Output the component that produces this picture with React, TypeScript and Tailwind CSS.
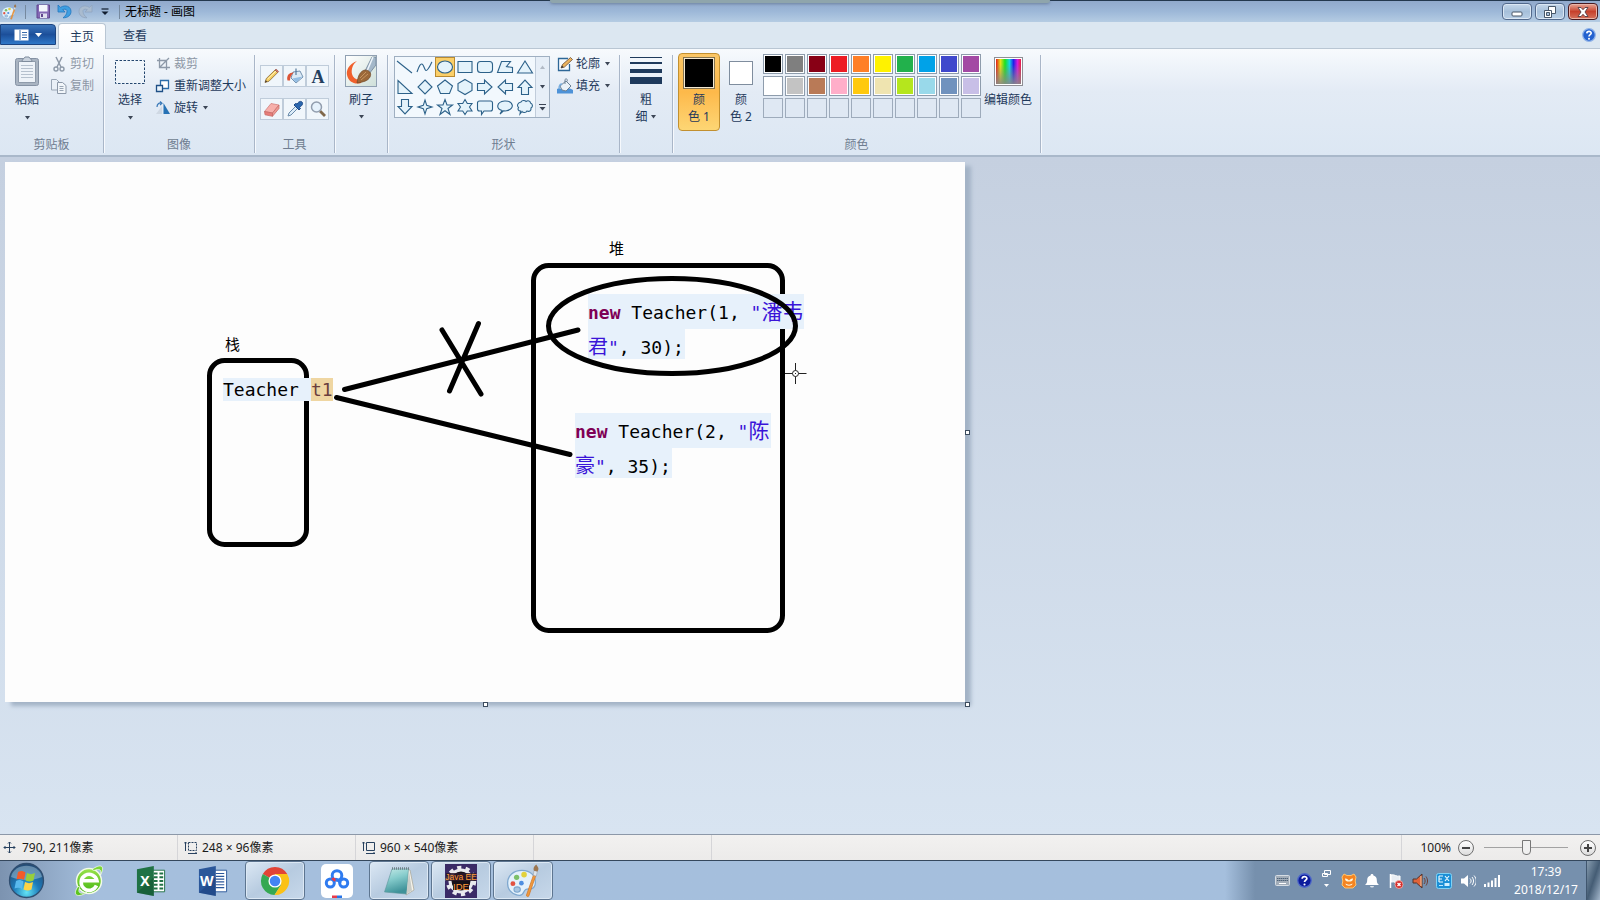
import type { ReactNode } from "react";

const ui = "font-['Noto_Sans','Noto_Sans_CJK_SC',sans-serif]";

function Caret({ className = "" }: { className?: string }) {
  return (
    <svg className={className} width="7" height="4" viewBox="0 0 7 4" aria-hidden="true">
      <path d="M1 0h5L3.500 3.500z" fill="#3c4656" />
    </svg>
  );
}

function Group({ label, className = "", children }: { label?: string; className?: string; children: ReactNode }) {
  return (
    <section className={`flex flex-col justify-between border-r border-[#a9b6c8] shadow-[1px_0_0_#f6f9fd] ${className}`}>
      <div className="flex items-start">{children}</div>
      <div className="text-center text-[#6f7d90] leading-4">{label}</div>
    </section>
  );
}

/* ---------- title bar ---------- */

function PaletteIcon({ size }: { size: number }) {
  return (
    <svg width={size} height={size} viewBox="0 0 32 32" aria-hidden="true">
      <path d="M15 6C7 6 1.500 11 1.500 18S7 29.500 13 29.500c4 0 3-4 5.500-5.500 3-1.500 8 1 9-5C28.500 11 23 6 15 6z" fill="#e4f1fb" stroke="#7fa8cf" strokeWidth="1.200" />
      <ellipse cx="10.500" cy="24" rx="3" ry="2.500" fill="#a8c6e2" stroke="#7fa8cf" />
      <circle cx="6.500" cy="18.500" r="2.300" fill="#e25342" />
      <circle cx="10" cy="12.500" r="2.500" fill="#7cc06a" />
      <circle cx="17" cy="10" r="2.600" fill="#e3d23d" />
      <circle cx="14.500" cy="18" r="2.200" fill="#4f8fe0" />
      <path d="M26 10l2 1-6.500 19c-.6 1.300-2.600.600-2.200-.800z" fill="#f09a3c" stroke="#d0762a" strokeWidth=".7" />
      <path d="M25.500 10.500l1-4.500 3 1-1 4.500z" fill="#dfe4ea" stroke="#8f9aa8" strokeWidth=".5" />
      <path d="M26.300 6.300C25 3 28 1 28.500.500c.500 1.500 3.500 3 1.200 6.500z" fill="#9c7650" />
    </svg>
  );
}

function TitleBar() {
  const quick = "flex h-5 w-[21px] items-center justify-center";
  return (
    <header className="relative flex h-[22px] items-center border-t border-[#24384e] bg-linear-to-b from-[#91a9cc] via-[#9db8d8] to-[#b5cce3]">
      <div className="absolute -top-px left-[34.400%] right-[34.400%] h-[3px] rounded-b-sm bg-[#8fa5ac] shadow-[0_1px_3px_#6d819f]" />
      <span className="ml-px flex w-[24px] items-center"><PaletteIcon size={16} /></span>
      <span className="h-[14px] w-px bg-[#75899f]" />
      <button aria-label="保存" className="ml-[6px] flex h-5 w-[22px] items-center justify-center">
        <svg width="15" height="15" viewBox="0 0 15 15">
          <path d="M1 1h12.500v13H1z" fill="#8368b4" stroke="#60458e" />
          <path d="M3 1h8.500v6.500H3z" fill="#f3f7fc" />
          <path d="M4 9.500h7V14H4z" fill="#dfe0ef" />
          <path d="M5 10h2v3H5z" fill="#60458e" />
        </svg>
      </button>
      <button aria-label="撤消" className={quick}>
        <svg width="15" height="15" viewBox="0 0 15 15">
          <path d="M1 1v7h7L5.700 5.600c3-1.200 4.600 0 4.300 2.200C9.700 10 8.500 12 6 13.800 11 14 14 11 14 7.500 14 2.500 8.500.200 3.500 3.400z" fill="#3f9fe2" stroke="#2376bd" strokeWidth=".8" />
        </svg>
      </button>
      <button aria-label="重做" className={quick}>
        <svg width="15" height="15" viewBox="0 0 15 15">
          <path d="M14 1v7H7l2.300-2.400c-3-1.200-4.600 0-4.300 2.200C5.300 10 6.500 12 9 13.800 4 14 1 11 1 7.500 1 2.500 6.500.200 11.500 3.400z" fill="#a9bbcf" stroke="#8fa5bf" strokeWidth=".8" />
        </svg>
      </button>
      <button aria-label="自定义快速访问工具栏" className="flex h-5 w-[18px] items-center justify-center">
        <svg width="8" height="8" viewBox="0 0 8 8"><path d="M.500 1h7" stroke="#111d2e" strokeWidth="1.200" /><path d="M.500 3.500h7L4 7z" fill="#111d2e" /></svg>
      </button>
      <span className="ml-[5px] h-[14px] w-px bg-[#75899f]" />
      <h1 className="ml-[5px] flex-1 leading-5 text-black">无标题 - 画图</h1>
      <div className="flex gap-[3px] pr-[2px]">
        <button aria-label="最小化" className="flex h-[17px] w-[30px] items-center justify-center rounded-sm border border-[#52698c] bg-linear-to-b from-[#c5d7ea] via-[#a6bfda] to-[#b9cfe6] shadow-[inset_0_0_0_1px_#dbe7f4]">
          <svg width="12" height="10" viewBox="0 0 12 10"><rect x="1" y="5" width="10" height="4" rx="1" fill="#fff" stroke="#485769" /></svg>
        </button>
        <button aria-label="还原" className="flex h-[17px] w-[30px] items-center justify-center rounded-sm border border-[#52698c] bg-linear-to-b from-[#c5d7ea] via-[#a6bfda] to-[#b9cfe6] shadow-[inset_0_0_0_1px_#dbe7f4]">
          <svg width="12" height="12" viewBox="0 0 12 12" fill="#fff" stroke="#485769"><path d="M4.500.500h7v7h-7z" /><path d="M.500 4.500h7v7h-7z" /><path d="M2.500 6.500h3v3h-3z" fill="#a6bfda" /></svg>
        </button>
        <button aria-label="关闭" className="flex h-[17px] w-[30px] items-center justify-center rounded-sm border border-[#4a1a20] bg-linear-to-b from-[#e6a596] via-[#c6402c] to-[#d4705b] shadow-[inset_0_0_0_1px_#eab5a8]">
          <svg width="12" height="10" viewBox="0 0 12 10"><path d="M1 .500h3L6 2.700 8 .500h3L8 5l3 4.500H8L6 7.300 4 9.500H1L4 5z" fill="#fff" stroke="#553b42" strokeWidth=".9" /></svg>
        </button>
      </div>
    </header>
  );
}

function HelpBall({ size, dark = false }: { size: number; dark?: boolean }) {
  return (
    <svg width={size} height={size} viewBox="0 0 14 14" aria-hidden="true">
      <circle cx="7" cy="7" r="6.300" fill={dark ? "#0c1c9c" : "#2361cf"} stroke={dark ? "#4c66c9" : "#8fb2e8"} strokeWidth="1.200" />
      <path d="M4.800 5.400C4.900 2.700 9.300 2.800 9.200 5.300 9.100 6.700 7 6.700 7 8.500" fill="none" stroke="#fff" strokeWidth="1.600" />
      <circle cx="7" cy="10.700" r="1" fill="#fff" />
    </svg>
  );
}

function Tabs() {
  return (
    <nav className="flex h-[27px] items-end border-b border-[#b9c6d3] bg-[#dce7f1]">
      <button aria-label="文件" className="mb-[3px] flex h-[21px] w-14 items-center justify-center gap-[6px] rounded-tr-sm border border-[#1c4480] bg-linear-to-b from-[#3c76bc] via-[#1c4f9a] to-[#2f78c8]">
        <svg width="15" height="12" viewBox="0 0 15 12"><rect x=".5" y=".5" width="14" height="11" fill="#fff" /><path d="M6 1v10" stroke="#3a6cab" /><path d="M8 3.500h5M8 6h5M8 8.500h5" stroke="#3a6cab" /></svg>
        <svg width="7" height="4" viewBox="0 0 7 4"><path d="M0 0h7L3.500 4z" fill="#fff" /></svg>
      </button>
      <button className="-mb-px ml-[2px] h-[26px] w-12 rounded-t-sm border border-b-0 border-[#b9c6d3] bg-linear-to-b from-white to-[#f7fafd] text-[#1e395b]">主页</button>
      <button className="h-[25px] w-[58px] text-[#1e395b]">查看</button>
      <span className="flex-1" />
      <button aria-label="帮助" className="mr-1 mb-[3px] flex h-5 w-[14px] items-center justify-center"><HelpBall size={14} /></button>
    </nav>
  );
}

/* ---------- ribbon ---------- */

const shapes: { name: string; d: string }[] = [
  { name: "直线", d: "M2 4l15 12" },
  { name: "曲线", d: "M2 15c2-6 4-10 6-7s2 8 5 4 3-6 4-7" },
  { name: "椭圆形", d: "M2.500 10a7.500 6 0 1 0 15 0a7.500 6 0 1 0-15 0z" },
  { name: "矩形", d: "M3 4.500h14v11H3z" },
  { name: "圆角矩形", d: "M5.500 4.500h9q3 0 3 3v5q0 3-3 3h-9q-3 0-3-3v-5q0-3 3-3z" },
  { name: "多边形", d: "M6.500 4.500h9l-4 5 6 1v5h-15z" },
  { name: "三角形", d: "M10 4l7.500 12h-15z" },
  { name: "直角三角形", d: "M3 3.500v13h14z" },
  { name: "菱形", d: "M10 3l7 7-7 7-7-7z" },
  { name: "五边形", d: "M10 3l7.500 6-3 7.500h-9L2.500 9z" },
  { name: "六边形", d: "M10 2.500l7 4v7l-7 4-7-4v-7z" },
  { name: "右箭头", d: "M2.500 6.500h7V3l7.500 7-7.500 7v-3.500h-7z" },
  { name: "左箭头", d: "M17.500 6.500h-7V3L3 10l7.500 7v-3.500h7z" },
  { name: "向上箭头", d: "M6.500 17.500v-7H3L10 3l7 7.500h-3.500v7z" },
  { name: "向下箭头", d: "M6.500 2.500v7H3l7 7.500 7-7.500h-3.500v-7z" },
  { name: "四角星形", d: "M10 3l1.700 5.300L17 10l-5.300 1.700L10 17l-1.700-5.300L3 10l5.300-1.700z" },
  { name: "五角星形", d: "M10 2.500l2 5.500h5.500L13 11.500l2 6-5-3.700-5 3.700 2-6L2.500 8H8z" },
  { name: "六角星形", d: "M10 2.500l2.300 4h4.700L14.500 10l2.500 4h-4.700L10 17.500 7.700 14H3l2.500-4L3 6.500h4.700z" },
  { name: "圆角矩形标注", d: "M4.500 4h11q2 0 2 2v6q0 2-2 2H9l-2.500 3.500V14h-2q-2 0-2-2V6q0-2 2-2z" },
  { name: "椭圆形标注", d: "M7 13.500C1 12 1 5 9.500 4c9-.500 11 8 2 9.800-1.500.300-2 .100-3 0L5 17z" },
  { name: "云形标注", d: "M6 5c1-2 4-2 5-.500 2-1.500 4.500-.500 4.500 1.500 2.500 1 2.500 4 .500 5 .500 3-2 4-4 3-1 2-4 2-5 .500L5 17l.500-3C3 14 2.500 12 3.500 10.500 1.500 9 2.500 5.500 6 5z" },
];

const tools: { name: string; icon: ReactNode }[] = [
  { name: "铅笔", icon: <><path d="M2 15.500l1.300-4L12 3l2.700 2.500-8.700 8.700z" fill="#f6cf63" stroke="#86683a" strokeWidth=".8" /><path d="M4.700 12L13 4" stroke="#fff3bd" /><path d="M12 3l1-1 2.700 2.500-1 1z" fill="#d9776b" stroke="#8d5148" strokeWidth=".6" /><path d="M2 15.500l.800-2.300 1.400 1.400z" fill="#3b332c" /></> },
  { name: "用颜色填充", icon: <><path d="M7 5l7-1 3 6-7 6-5-5z" fill="#dceaf5" stroke="#55799c" strokeWidth=".8" /><path d="M10 8V1.500" stroke="#55799c" strokeWidth="1.200" /><path d="M1.500 13.500C0 8 4 5 8 5.500 5 8 4 10 4 13.500z" fill="#dc5436" /><path d="M6.500 11.500L16.500 9.500l-6.500 6z" fill="#92bde4" /></> },
  { name: "文本", icon: <text x="9" y="15.500" textAnchor="middle" fontFamily="Liberation Serif, serif" fontWeight="bold" fontSize="18" fill="#24405f">A</text> },
  { name: "橡皮擦", icon: <><path d="M1.500 11.500l6.500-8 8 1.500-6.500 8z" fill="#f7b0ab" stroke="#cf7672" strokeWidth=".7" /><path d="M1.500 11.500l8 1.500v3.300l-7.500-1.500z" fill="#e87e79" stroke="#c46763" strokeWidth=".7" /><path d="M9.500 13L16 5v3.500l-6.500 7.800z" fill="#ee9a94" stroke="#c46763" strokeWidth=".7" /></> },
  { name: "颜色选取器", icon: <><path d="M2 16l1-3 7-7 2 2-7 7z" fill="#dcecf8" stroke="#6b8cab" /><path d="M8 5l5 5 1.500-1.500-1-1C17 5 17 3 16 2s-3-1-5 2l-1.500-.500z" fill="#2b67ae" stroke="#1b4785" /></> },
  { name: "放大镜", icon: <><path d="M11 11l5 5" stroke="#80684a" strokeWidth="2.800" /><circle cx="7.500" cy="7" r="5" fill="#e6f2fc" stroke="#929eae" strokeWidth="1.500" /></> },
];

const colours: { name: string; cls: string }[] = [
  { name: "黑色", cls: "bg-[#000000]" }, { name: "灰色-50%", cls: "bg-[#7f7f7f]" }, { name: "深红色", cls: "bg-[#880015]" }, { name: "红色", cls: "bg-[#ed1c24]" }, { name: "橙色", cls: "bg-[#ff7f27]" },
  { name: "黄色", cls: "bg-[#fff200]" }, { name: "绿色", cls: "bg-[#22b14c]" }, { name: "青绿", cls: "bg-[#00a2e8]" }, { name: "靛蓝", cls: "bg-[#3f48cc]" }, { name: "紫色", cls: "bg-[#a349a4]" },
  { name: "白色", cls: "bg-[#ffffff]" }, { name: "灰色-25%", cls: "bg-[#c3c3c3]" }, { name: "褐色", cls: "bg-[#b97a57]" }, { name: "玫瑰色", cls: "bg-[#ffaec9]" }, { name: "金色", cls: "bg-[#ffc90e]" },
  { name: "浅黄色", cls: "bg-[#efe4b0]" }, { name: "酸橙色", cls: "bg-[#b5e61d]" }, { name: "淡青绿色", cls: "bg-[#99d9ea]" }, { name: "蓝灰色", cls: "bg-[#7092be]" }, { name: "淡紫色", cls: "bg-[#c8bfe7]" },
];

function Row({ icon, label, muted = false, caret = false }: { icon: ReactNode; label: string; muted?: boolean; caret?: boolean }) {
  return (
    <button disabled={muted} className={`flex h-[22px] items-center gap-[3px] whitespace-nowrap ${muted ? "text-[#8d97a5]" : "text-[#1e395b]"}`}>
      <svg width="16" height="16" viewBox="0 0 16 16" fill="none" aria-hidden="true">{icon}</svg>
      <span>{label}</span>
      {caret && <Caret className="ml-px" />}
    </button>
  );
}

function Ribbon() {
  return (
    <div className="flex h-[108px] border-b-2 border-[#a9b8ca] bg-linear-to-b from-[#f7fafd] via-[#e3ebf5] via-40% to-[#dce7f3] pt-[6px] pb-[2px] text-[#1e395b]">
      <Group label="剪贴板" className="w-[104px]">
        <button className="ml-[13px] flex w-[28px] flex-col items-center">
          <svg width="26" height="32" viewBox="0 0 26 32">
            <rect x="1.500" y="3.500" width="23" height="27" rx="2" fill="#a9b4c2" stroke="#8592a4" />
            <path d="M4.500 6.500h17v21h-17z" fill="#eef3f9" stroke="#8f9bab" />
            <path d="M7 10.500h12M7 13.500h12M7 16.500h12M7 19.500h12M7 22.500h12" stroke="#b6c1ce" />
            <path d="M8 6.500c0-3 2-2 3-4.500h4c1 2.500 3 1.500 3 4.500z" fill="#c9d2dd" stroke="#7f8c9d" />
          </svg>
          <span className="mt-[5px] leading-4">粘贴</span>
          <Caret className="mt-[8px]" />
        </button>
        <div className="ml-[10px] -mt-[2px] flex flex-col">
          <Row muted label="剪切" icon={<><path d="M5 1l5 10M11 1L6 11" stroke="#8d99a8" strokeWidth="1.500" /><circle cx="5" cy="13" r="2" stroke="#8d99a8" strokeWidth="1.400" /><circle cx="11" cy="13" r="2" stroke="#8d99a8" strokeWidth="1.400" /></>} />
          <Row muted label="复制" icon={<><path d="M.500 1.500h5l2.500 2.500v8H.500z" fill="#eaf0f7" stroke="#9aa6b5" /><path d="M6.500 4.500h5l3.500 3v8H6.500z" fill="#f2f6fa" stroke="#8c98a8" /><path d="M8.500 8.500h4M8.500 10.500h4M8.500 12.500h4" stroke="#9aa6b5" /></>} />
        </div>
      </Group>

      <Group label="图像" className="w-[151px]">
        <button className="ml-[10px] flex w-8 flex-col items-center">
          <svg width="32" height="32" viewBox="0 0 32 32"><rect x="1.500" y="5.500" width="29" height="23" fill="#f2f7fc" fillOpacity=".5" stroke="#24466e" strokeDasharray="2.500 1.500" /></svg>
          <span className="mt-[5px] leading-4">选择</span>
          <Caret className="mt-[8px]" />
        </button>
        <div className="ml-[9px] -mt-[2px] flex flex-col">
          <Row muted label="裁剪" icon={<><path d="M4.500 2v9.500H15M2 4.500h9.500V14M4.500 11.500L14 2" stroke="#8d99a8" strokeWidth="1.300" /></>} />
          <Row label="重新调整大小" icon={<><path d="M5.500 2.500h8v8h-8z" fill="#fff" stroke="#2b6ca8" strokeWidth="1.300" /><path d="M1.500 7.500h6v6h-6z" fill="#eaf4fc" stroke="#1e4f86" strokeWidth="1.300" /></>} />
          <Row caret label="旋转" icon={<><path d="M7 6v8H1z" fill="#cfd8e3" /><path d="M8.500 3v11H15z" fill="#2772b5" /><path d="M2 7c0-3 2-4.500 4.500-4M5 1.500l2 1.700L5 5" stroke="#3a79b8" strokeWidth="1.200" /></>} />
        </div>
      </Group>

      <Group label="工具" className="w-20">
        <div className="mt-[10px] ml-[5px] grid grid-cols-3 gap-y-[11px]">
          {tools.map((t) => (
            <button key={t.name} aria-label={t.name} className="flex h-[22px] w-[23px] items-center justify-center border border-[#bfccda] bg-[#f0f6fb]">
              <svg width="18" height="18" viewBox="0 0 18 18">{t.icon}</svg>
            </button>
          ))}
        </div>
      </Group>

      <Group className="w-[53px]">
        <button className="ml-[10px] flex w-8 flex-col items-center">
          <span className="border border-[#90a0b2] bg-linear-to-br from-white to-[#cfe0da]">
            <svg width="30" height="30" viewBox="0 0 30 30">
              <path d="M11 5C3 8 0 14 1 19c1.500 7 8 10 14 8l1-4c-5 1.500-9-.500-10-5C5 13 7 8 11 5z" fill="#f0602c" />
              <path d="M19 15L26 1l4 0v8l-7 9z" fill="#a4b8ca" stroke="#64798d" strokeWidth=".7" />
              <path d="M27 1l-6 14" stroke="#eef5fb" strokeWidth="1.500" />
              <path d="M11 27c1-7 3-12 8-13 4 0 7 3 5 7-2 4-7 5-13 6z" fill="#9b6839" stroke="#6e4625" strokeWidth=".7" />
              <path d="M14 22l6-6M15 24l7-6" stroke="#c79560" />
            </svg>
          </span>
          <span className="mt-[5px] leading-4">刷子</span>
          <Caret className="mt-[7px]" />
        </button>
      </Group>

      <Group label="形状" className="w-[232px]">
        <div className="mt-px ml-[6px] flex border border-[#9fafc1] bg-[#f2f8fd]">
          <div className="grid grid-cols-7">
            {shapes.map((s, i) => (
              <button key={s.name} aria-label={s.name} className={`flex size-5 items-center justify-center ${i === 2 ? "border border-[#b88a31] bg-[#fbcf68]" : ""}`}>
                <svg className="shrink-0" width="20" height="20" viewBox="0 0 20 20">
                  <path d={s.d} fill={i < 2 ? "none" : "#e4f3fb"} stroke="#2c6189" strokeWidth="1.100" />
                </svg>
              </button>
            ))}
          </div>
          <div className="flex w-[14px] flex-col border-l border-[#c0ccda] bg-[#e6eef7]">
            <button aria-label="上一行" className="flex flex-1 items-center justify-center"><Caret className="rotate-180 opacity-30" /></button>
            <button aria-label="下一行" className="flex flex-1 items-center justify-center"><Caret /></button>
            <button aria-label="更多形状" className="flex flex-1 items-center justify-center">
              <svg width="7" height="7" viewBox="0 0 7 7"><path d="M0 .500h7" stroke="#3c4656" /><path d="M.500 3h6L3.500 6.500z" fill="#3c4656" /></svg>
            </button>
          </div>
        </div>
        <div className="ml-[7px] -mt-[2px] flex flex-col">
          <Row caret label="轮廓" icon={<><path d="M11 2.500H1.500v12h11V8" fill="#f7fbfe" stroke="#2e6797" strokeWidth="1.300" /><path d="M4 12l1.500-3.500 8-7 2 2-8 7.500z" fill="#edb35c" stroke="#6b4f37" strokeWidth=".8" /><path d="M4 12l1-2.500 1.700 1.700z" fill="#333" /></>} />
          <Row caret label="填充" icon={<><path d="M0 15.500V11c3-2 4 1 7 0s6-1 9 1v3.500z" fill="#4d92d8" /><path d="M3 8l6-5 5 5-5 5-4-1z" fill="#eaf2f8" stroke="#6b8194" /><path d="M8 6V1.500c1.500-1.500 3 0 2 2" stroke="#6b8194" /><path d="M2 11c0-3 1-5 3-5" stroke="#7aaede" strokeWidth="1.500" /></>} />
        </div>
      </Group>

      <Group className="w-[53px]">
        <button className="ml-[10px] flex w-8 flex-col items-center">
          <svg width="32" height="32" viewBox="0 0 32 32" fill="#1f3a5c"><path d="M0 2h32v1H0zM0 7h32v2H0zM0 14h32v4H0zM0 22h32v7H0z" /></svg>
          <span className="mt-[5px] leading-4">粗</span>
          <span className="mt-px flex items-center gap-[2px] leading-4">细 <Caret /></span>
        </button>
      </Group>

      <Group label="颜色" className="w-[368px]">
        <button className="-mt-[2px] ml-[5px] flex h-[78px] w-[42px] flex-col items-center rounded-sm border border-[#c29030] bg-linear-to-b from-[#fbc665] via-[#fdb94a] to-[#fdd674] pt-[3px]">
          <span className="block size-8 border border-[#84734f] bg-black outline-1 -outline-offset-2 outline-[#f4e9d2]" />
          <span className="mt-[3px] leading-4">颜</span>
          <span className="mt-px leading-4">色 1</span>
        </button>
        <button className="-mt-[2px] flex h-[78px] w-[42px] flex-col items-center pt-2">
          <span className="block size-6 border border-[#7f8d9e] bg-white" />
          <span className="mt-[7px] leading-4">颜</span>
          <span className="mt-px leading-4">色 2</span>
        </button>
        <div className="-mt-px ml-px grid grid-cols-10 gap-[2px]">
          {colours.map((c) => (
            <button key={c.name} aria-label={c.name} className="size-5 border border-[#8e9cac] bg-white p-px"><span className={`block size-4 ${c.cls}`} /></button>
          ))}
          {Array.from({ length: 10 }, (_, i) => (
            <button key={i} disabled aria-label="自定义颜色" className="size-5 border border-[#9eabbb] bg-[#dfe8f3]" />
          ))}
        </div>
        <button className="ml-[3px] flex flex-col items-center pt-[2px] whitespace-nowrap">
          <span className="border border-[#8e8e94] bg-white p-px">
            <svg width="25" height="25" viewBox="0 0 25 25">
              <defs>
                <linearGradient id="hue"><stop offset="0" stopColor="#e21b1b" /><stop offset=".18" stopColor="#e8e017" /><stop offset=".36" stopColor="#1ee01e" /><stop offset=".54" stopColor="#13d5e5" /><stop offset=".7" stopColor="#2020e8" /><stop offset=".86" stopColor="#d81bd8" /><stop offset="1" stopColor="#e81f3d" /></linearGradient>
                <linearGradient id="grey" x1="0" y1="0" x2="0" y2="1"><stop offset=".2" stopColor="#888" stopOpacity="0" /><stop offset="1" stopColor="#888" stopOpacity=".9" /></linearGradient>
              </defs>
              <path d="M0 0h25v25H0z" fill="url(#hue)" /><path d="M0 0h25v25H0z" fill="url(#grey)" />
            </svg>
          </span>
          <span className="mt-[6px] leading-4">编辑颜色</span>
        </button>
      </Group>
    </div>
  );
}

/* ---------- canvas ---------- */

function CodeText({ index, first, second, age, className }: { index: number; first: string; second: string; age: number; className: string }) {
  return (
    <div className={`absolute whitespace-pre ${className}`}>
      <div className="h-[35px] bg-[#e7f1fb] leading-[37px]">
        <b className="text-[#7f0055]">new</b> Teacher({index}, <span className="text-[#3a14d8]">"<span className="text-[21px]">{first}</span></span>
      </div>
      <div className="h-[30px] w-[97px] bg-[#e7f1fb] leading-9">
        <span className="text-[#3a14d8]"><span className="text-[20px]">{second}</span>"</span>, {age});
      </div>
    </div>
  );
}

function Canvas() {
  const handle = "absolute size-[5px] border border-[#3c4c5e] bg-white";
  return (
    <main className="flex-1 bg-linear-to-b from-[#c5d0e0] to-[#d8e4f1] pt-[5px] pb-[132px] pl-[5px]">
      <div className="relative h-[540px] w-[960px] bg-[#fdfdfd] font-['DejaVu_Sans_Mono','Noto_Sans_CJK_SC',monospace] text-[18px] text-black shadow-[6px_4px_4px_#a3b3c6]">
        <svg className="absolute inset-0" width="960" height="540" viewBox="0 0 960 540" fill="none" stroke="#000" strokeWidth="5">
          <rect x="204.500" y="198.500" width="97" height="184" rx="15" />
          <rect x="528.500" y="103.500" width="249" height="365" rx="15" />
        </svg>
        <span className="absolute top-[172px] left-[220px] text-[15px] leading-[22px]">栈</span>
        <span className="absolute top-[76px] left-[604px] text-[15px] leading-[22px]">堆</span>
        <div className="absolute top-[216px] left-[218px] flex h-[23px] leading-[23px]">
          <span className="w-[88px] bg-[#e7f1fb]">Teacher</span>
          <span className="bg-[#efd6a2] text-[#6a3e3e]">t1</span>
        </div>
        <CodeText index={1} first="潘韦" second="君" age={30} className="top-[132px] left-[583px] w-[216px]" />
        <CodeText index={2} first="陈" second="豪" age={35} className="top-[251px] left-[570px] w-[196px]" />
        <svg className="absolute inset-0" width="960" height="540" viewBox="0 0 960 540" fill="none" stroke="#000" strokeWidth="5" strokeLinecap="round">
          <ellipse cx="667" cy="164" rx="123.500" ry="47.500" />
          <path d="M339.500 227.500L573 168M331.500 235.500L565 292.500M437 168l39 64M473.500 161.500L444.500 229" />
          <g stroke="#222" strokeWidth="1" strokeLinecap="butt">
            <circle cx="790.500" cy="211.500" r="3" fill="#fff" />
            <path d="M780 211.500h7.500M793.500 211.500h8M790.500 201v7.500M790.500 214.500v7.500M790 211.500h1" />
          </g>
        </svg>
        <span className={`${handle} top-[268px] -right-[5px]`} />
        <span className={`${handle} -right-[5px] -bottom-[5px]`} />
        <span className={`${handle} -bottom-[5px] left-[478px]`} />
      </div>
    </main>
  );
}

/* ---------- status bar ---------- */

function StatusBar() {
  const cell = "flex w-[178px] items-center gap-[5px] border-r border-[#d5d5d8] pl-[6px]";
  return (
    <footer className="flex h-[26px] border-t border-[#8c98a8] bg-linear-to-b from-[#f2f1f0] to-[#ecebea] text-[#1b1b1b]">
      <div className="flex w-[178px] items-center gap-[6px] border-r border-[#d5d5d8] pl-[3px]">
        <svg width="13" height="13" viewBox="0 0 13 13" stroke="#27415f" fill="none"><path d="M6.500 1v11M1 6.500h11M5 2.500l1.500-1.500L8 2.500M5 10.500L6.500 12 8 10.500M2.500 5L1 6.500 2.500 8M10.500 5L12 6.500 10.500 8" /></svg>
        790, 211像素
      </div>
      <div className={cell}>
        <svg width="13" height="13" viewBox="0 0 13 13" stroke="#27415f" fill="none"><path d="M1.500 1v9M0 2.500L1.500 1 3 2.500M4 12.500h9M11.500 11l1.500 1.500" /><path d="M4.500 1.500h8v8h-8z" strokeDasharray="2 1" /></svg>
        248 × 96像素
      </div>
      <div className={cell}>
        <svg width="13" height="13" viewBox="0 0 13 13" stroke="#27415f" fill="none"><path d="M1.500 1v9M0 2.500L1.500 1 3 2.500M4 12.500h9M11.500 11l1.500 1.500" /><path d="M4.500 1.500h8v8h-8z" /></svg>
        960 × 540像素
      </div>
      <div className={cell} />
      <div className="flex-1 border-r border-[#d5d5d8]" />
      <div className="flex w-[198px] items-center justify-end pr-1">
        <label htmlFor="zoom" className="mr-[7px]">100%</label>
        <button aria-label="缩小" className="flex size-4 items-center justify-center rounded-full border border-[#6f6f6f] bg-linear-to-b from-white to-[#dcdcdc]"><span className="h-[2px] w-2 bg-[#444]" /></button>
        <input id="zoom" type="range" min="0" max="100" defaultValue="50" className="mr-[12px] ml-[10px] h-[17px] w-[84px] appearance-none bg-transparent [background-image:linear-gradient(#a2a2a2,#a2a2a2)] bg-[length:100%_1px] bg-center bg-no-repeat [&::-webkit-slider-thumb]:h-[15px] [&::-webkit-slider-thumb]:w-[9px] [&::-webkit-slider-thumb]:appearance-none [&::-webkit-slider-thumb]:rounded-b-[4px] [&::-webkit-slider-thumb]:border [&::-webkit-slider-thumb]:border-[#777] [&::-webkit-slider-thumb]:bg-[#f0f0f0]" />
        <button aria-label="放大" className="flex size-4 items-center justify-center rounded-full border border-[#6f6f6f] bg-linear-to-b from-white to-[#dcdcdc]">
          <svg width="8" height="8" viewBox="0 0 8 8"><path d="M4 0v8M0 4h8" stroke="#444" strokeWidth="2" /></svg>
        </button>
      </div>
    </footer>
  );
}

/* ---------- taskbar ---------- */

function Office({ letter, fill, dark, grid }: { letter: string; fill: string; dark: string; grid: boolean }) {
  return (
    <svg width="30" height="32" viewBox="0 0 32 32">
      <path d="M17 4.500h13.500v23H17z" fill="#fff" stroke={fill} />
      {grid ? (
        <path d="M19 8h4M25 8h4M19 12h4M25 12h4M19 16h4M25 16h4M19 20h4M25 20h4M19 24h4M25 24h4" stroke={fill} strokeWidth="2" />
      ) : (
        <path d="M19 8h9M19 11h9M19 14h9M19 17h9M19 20h9M19 23h9" stroke={fill} strokeWidth="1.300" />
      )}
      <path d="M1 3.500L19 0v32L1 28.500z" fill={fill} /><path d="M1 28.500L19 12v20z" fill={dark} opacity=".35" />
      <text x="9.500" y="21.500" textAnchor="middle" fontFamily="Open Sans, sans-serif" fontWeight="bold" fontSize="15" fill="#fff">{letter}</text>
    </svg>
  );
}

const apps: { name: string; open: boolean; icon: ReactNode }[] = [
  { name: "浏览器", open: false, icon: (
    <svg width="32" height="32" viewBox="0 0 32 32">
      <defs><linearGradient id="leaf" x1="0" y1="0" x2="0" y2="1"><stop offset="0" stopColor="#9ae34c" /><stop offset="1" stopColor="#45b512" /></linearGradient></defs>
      <circle cx="16" cy="16" r="12.500" fill="url(#leaf)" stroke="#f2fbe8" strokeWidth="1.500" />
      <path d="M23.500 20.500A8 8 0 1 1 24 15.800H9.500" fill="none" stroke="#fff" strokeWidth="3.600" />
      <path d="M5 21.500C-1 30 4 33.500 14 27.500 6 29.500 4.500 27 7 22z" fill="#5cc41e" stroke="#f2fbe8" strokeWidth=".8" />
      <path d="M19 4.500C27-1.500 33 0 27.500 10 29 4 26 3.500 21 5.500z" fill="#7cd634" stroke="#f2fbe8" strokeWidth=".8" />
    </svg>
  ) },
  { name: "Excel", open: false, icon: <Office letter="X" fill="#207245" dark="#0a4023" grid /> },
  { name: "Word", open: false, icon: <Office letter="W" fill="#2b579a" dark="#12336c" grid={false} /> },
  { name: "Chrome", open: true, icon: (
    <svg width="30" height="32" viewBox="0 0 32 32">
      <path d="M16 16L3 8.500A15 15 0 0 1 29 8.500H16z" fill="#e14335" />
      <path d="M16 16L3 8.500A15 15 0 0 0 15.500 31l7-11z" fill="#35a852" />
      <path d="M16 16l6.500 4L15.500 31A15 15 0 0 0 29 8.500H16z" fill="#fbc116" />
      <circle cx="16" cy="16" r="7" fill="#fff" /><circle cx="16" cy="16" r="5.600" fill="#4384f4" />
    </svg>
  ) },
  { name: "百度网盘", open: false, icon: (
    <svg width="32" height="34" viewBox="0 0 32 34">
      <rect width="32" height="34" rx="5" fill="#fff" />
      <g fill="none" stroke="#2f7bf0" strokeWidth="3">
        <circle cx="16" cy="11.500" r="4.800" />
        <circle cx="9.300" cy="19" r="4" />
        <circle cx="22.700" cy="19" r="4" />
        <path d="M12.500 16.500c2.500-2.500 4.500-1 7 2.500" />
      </g>
      <path d="M11.500 14a5 5 0 0 0 3 2.200" fill="none" stroke="#e83a49" strokeWidth="3" />
      <path d="M11 31.500h5V34h-5z" fill="#e83a49" /><path d="M16 31.500h5V34h-5z" fill="#2875e8" />
    </svg>
  ) },
  { name: "记事本", open: true, icon: (
    <svg width="32" height="32" viewBox="0 0 32 32">
      <defs><linearGradient id="note" x1="0" y1="0" x2=".3" y2="1"><stop offset="0" stopColor="#c3e9e6" /><stop offset=".45" stopColor="#86cccc" /><stop offset="1" stopColor="#3f9299" /></linearGradient></defs>
      <path d="M24 4l3 1 4 20-8 5z" fill="#f5f3ea" stroke="#a7a394" strokeWidth=".7" />
      <path d="M9 4h16.500L23.500 29 1.500 27z" fill="url(#note)" stroke="#5d959b" strokeWidth=".6" />
      <path d="M23.500 29L29 25.500 26 6z" fill="#c9cdc8" />
      <path d="M9 3.500h17" stroke="#6f8087" strokeWidth="2.400" strokeDasharray="1 1" />
    </svg>
  ) },
  { name: "Java EE IDE", open: true, icon: (
    <svg width="32" height="34" viewBox="0 0 32 34">
      <path d="M0 0h32v34H0z" fill="#3a2a66" />
      <circle cx="16" cy="17" r="13.500" fill="none" stroke="#e9eaee" strokeWidth="3.500" strokeDasharray="4.200 4.280" />
      <circle cx="16" cy="17" r="11" fill="#161019" stroke="#e9eaee" strokeWidth="3" />
      <path d="M1 9h30v8H1z" fill="#2a1829" opacity=".85" /><path d="M8 17.500h16V26H8z" fill="#161019" />
      <text x="16" y="16" textAnchor="middle" fontFamily="Liberation Sans, sans-serif" fontSize="8.500" fill="#ff9a3a">Java EE</text>
      <text x="16" y="25.500" textAnchor="middle" fontFamily="Liberation Sans, sans-serif" fontSize="9.500" fill="#ff9a3a">IDE</text>
    </svg>
  ) },
  { name: "画图", open: true, icon: <PaletteIcon size={34} /> },
];

const tray: { name: string; icon: ReactNode }[] = [
  { name: "通知", icon: <><path d="M8 1c.9 0 1.400.600 1.400 1.400C12 3 12.800 5 12.800 7c0 2.500.700 3.500 2.200 5H1c1.500-1.500 2.200-2.500 2.200-5 0-2 .8-4 3.400-4.600C6.600 1.600 7.100 1 8 1z" fill="#fff" /><path d="M6 13.200h4c-.3 1.600-3.700 1.600-4 0z" fill="#fff" /></> },
  { name: "操作中心", icon: <><path d="M2.500 1v14" stroke="#fff" strokeWidth="1.500" /><path d="M3 2c4-1 5 2 9 1v7c-4 1-5-2-9-1z" fill="#e9eef4" stroke="#fff" /><circle cx="11" cy="11.500" r="4" fill="#d32b2b" stroke="#f4b2aa" strokeWidth=".8" /><path d="M9.500 10l3 3M12.500 10l-3 3" stroke="#fff" strokeWidth="1.300" /></> },
  { name: "音频管理器", icon: <><path d="M1 6h3.500L10 1v14l-5.500-5H1z" fill="#e0643a" stroke="#53342d" /><path d="M9 3v10" stroke="#f8c9a2" /><path d="M12 5c1.500 2 1.500 4 0 6M14 3.500c2 3 2 6 0 9" stroke="#6d3c31" /></> },
  { name: "显卡控制", icon: <><rect x=".5" y=".5" width="15" height="15" rx="2" fill="#1b8fd6" stroke="#7fd2f5" /><path d="M3 3h4M3 3v6M3 6h3M3 9h4M9 3l4 5M13 3L9 8" stroke="#e8f8ff" strokeWidth="1.200" /><path d="M8.500 10h5v3h-5z" fill="#cfefff" /><path d="M3 12.500h4" stroke="#bfe9ff" /></> },
  { name: "音量", icon: <><path d="M1 5.500h3L8 2v12l-4-3.500H1z" fill="#fff" /><path d="M10 5.500c1.500 1.500 1.500 3.500 0 5M12 4c2 2.500 2 5.500 0 8M14 2.500c3 3.500 3 7.500 0 11" stroke="#fff" /></> },
  { name: "网络", icon: <path d="M0 11h2v3H0zM3.500 9.500h2V14h-2zM7 7.500h2V14H7zM10.500 5h2v9h-2zM14 2h2v12h-2z" fill="#fff" /> },
];

function Taskbar() {
  return (
    <nav className="flex h-10 items-center border-t border-[#35485d] bg-linear-to-r from-[#7c93b0] via-[#a5bfdd] via-6% to-[#a5bfdd]">
      <button aria-label="开始" className="flex h-full w-[59px] items-center pl-2">
        <svg width="37" height="37" viewBox="0 0 37 37">
          <defs><radialGradient id="orb" cx=".5" cy=".85" r=".85"><stop offset="0" stopColor="#62e3f5" /><stop offset=".45" stopColor="#1d7ab9" /><stop offset="1" stopColor="#244870" /></radialGradient></defs>
          <circle cx="18.500" cy="18.500" r="17" fill="url(#orb)" stroke="#304e70" strokeWidth="1.300" />
          <path d="M3 15C6 0 31 0 34 15c-9 4-22 4-31 0z" fill="#c8e1ee" opacity=".4" />
          <path d="M10 10c3-1.500 5-1 7.500.500L16 18c-2.500-1.500-4.500-1.500-7.500-.500z" fill="#f35a29" />
          <path d="M19 11c3 1.500 5 1.500 8 0L25.500 18.500c-3 1.500-5 1-8 0z" fill="#97cf3c" />
          <path d="M8 19c3-1.500 5-1 7.500.500L14 27c-2.500-1.500-4.500-1.500-7.500-.500z" fill="#59b9ed" />
          <path d="M17 20c3 1.500 5 1.500 8 0L23.500 27.500c-3 1.500-5 1-8 0z" fill="#fed344" />
        </svg>
      </button>
      <div className="flex h-full gap-[2px]">
        {apps.map((a) => (
          <button key={a.name} aria-label={a.name} className={`flex w-[60px] items-center justify-center rounded-sm border ${a.open ? "border-[#5d7590] bg-linear-to-br from-[#dce8f4] via-[#b7cbe0] to-[#c7d8ea] shadow-[inset_0_0_0_1px_#dce8f4]" : "border-transparent"}`}>{a.icon}</button>
        ))}
      </div>
      <span className="flex-1" />
      <div className="flex h-full items-center bg-linear-to-r from-transparent to-[#7690ad] to-8% pl-[45px] text-white">
        <button aria-label="键盘" className="flex w-6 justify-center">
          <svg width="15" height="11" viewBox="0 0 15 11" fill="none"><rect x=".5" y=".5" width="14" height="10" rx="1" fill="#a2adb9" stroke="#d6dde4" /><path d="M2 3.500h11M2 5.500h11" stroke="#4f6379" strokeDasharray="1.500 .5" /><path d="M4 8.500h7" stroke="#fff" /></svg>
        </button>
        <button aria-label="输入法帮助" className="flex w-5 justify-center"><HelpBall size={15} dark /></button>
        <button aria-label="语言栏选项" className="flex w-6 justify-center pb-1">
          <svg width="9" height="18" viewBox="0 0 9 18" fill="none"><path d="M2.500.500h6v4h-6zM.500 3.500h5v3h-5z" stroke="#fff" fill="#7690ad" /><path d="M2 14h5l-2.500 3z" fill="#fff" /></svg>
        </button>
        <button aria-label="安全软件" className="flex w-[22px] justify-center">
          <svg width="16" height="16" viewBox="0 0 16 16"><path d="M3 1l3 1.500h4L13 1l2 3-.800 4L15 12l-3 3H4l-3-3 .800-4L1 4z" fill="#f58420" stroke="#ffc56f" /><path d="M4 5.500c1.500 0 2.500.500 4 2 1.500-1.500 2.500-2 4-2 0 2.500-1.500 3-4 3s-4-.500-4-3zM4.500 10.500c2 1.500 5 1.500 7 0 0 3-7 3-7 0z" fill="#fff6dc" /></svg>
        </button>
        {tray.map((t) => (
          <button key={t.name} aria-label={t.name} className="flex w-6 justify-center"><svg width="16" height="16" viewBox="0 0 16 16" fill="none">{t.icon}</svg></button>
        ))}
        <time className="ml-[2px] w-[80px] text-center leading-[18px]">17:39<br />2018/12/17</time>
        <button aria-label="显示桌面" className="h-full w-[14px] border-l border-[#40566e] bg-linear-to-br from-[#879caf] via-[#455d75] to-[#a3b7cb]" />
      </div>
    </nav>
  );
}

export default function App() {
  return (
    <div className={`flex min-h-screen flex-col text-[12px] leading-4 ${ui}`}>
      <TitleBar />
      <Tabs />
      <Ribbon />
      <Canvas />
      <StatusBar />
      <Taskbar />
    </div>
  );
}
